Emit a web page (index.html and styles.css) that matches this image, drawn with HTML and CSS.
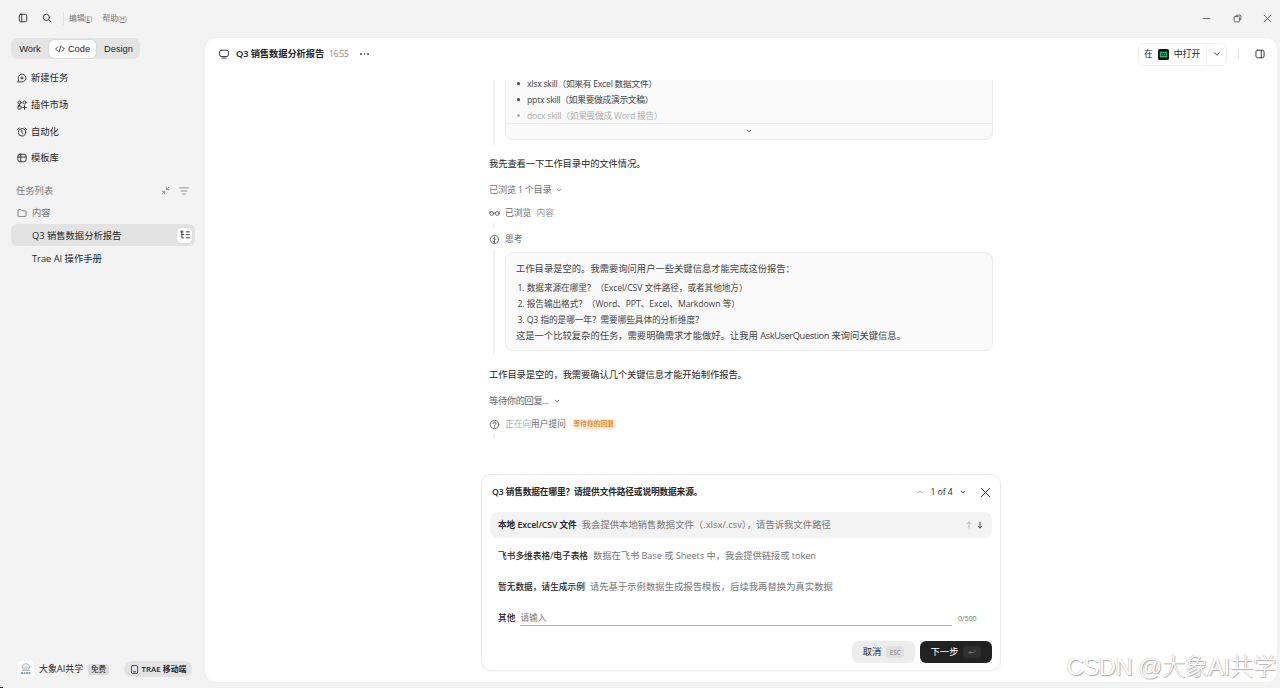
FILE: index.html
```html
<!DOCTYPE html>
<html lang="zh-CN">
<head>
    <meta charset="UTF-8">
    <meta name="viewport" content="width=device-width, initial-scale=1.0">
    <title>Q3 销售数据分析报告</title>
    <link rel="stylesheet" href="styles.css">
</head>
<body>
    <div class="app">

        <!-- 标题栏 -->
        <header class="titlebar">
            <svg class="icon i10 tb-panel" viewBox="0 0 16 16"><rect x="2" y="2" width="12" height="12" rx="2.5"/><path d="M6 2v12"/></svg>
            <svg class="icon i10 tb-search" viewBox="0 0 16 16"><circle cx="7" cy="7" r="5"/><path d="M11 11l3.5 3.5"/></svg>
            <span class="tb-line"></span>
            <span class="tb-menu">编辑<small>(<u>E</u>)</small></span>
            <span class="tb-menu">帮助<small>(<u>H</u>)</small></span>
            <div class="win-buttons">
                <svg class="icon i9" viewBox="0 0 16 16"><path d="M2 8h12"/></svg>
                <svg class="icon i9" viewBox="0 0 16 16"><rect x="2" y="4.5" width="9.5" height="9.5" rx="2"/><path d="M5 4.5V4a2 2 0 0 1 2-2h5a2 2 0 0 1 2 2v5a2 2 0 0 1-2 2"/></svg>
                <svg class="icon i9" viewBox="0 0 16 16"><path d="M2 2l12 12M14 2L2 14"/></svg>
            </div>
        </header>

        <div class="body">
            <!-- 侧边栏 -->
            <aside class="sidebar">
                <div class="tabs">
                    <span class="tab tab-work">Work</span>
                    <span class="tab tab-active"><svg class="icon i10" viewBox="0 0 16 16"><path d="M4.5 4.5L1 8l3.5 3.5M11.5 4.5L15 8l-3.5 3.5M9.5 3l-3 10"/></svg>Code</span>
                    <span class="tab tab-design">Design</span>
                </div>

                <nav class="nav">
                    <a class="nav-item"><svg class="icon i10" viewBox="0 0 16 16"><path d="M1.8 14.2H8a6.2 6.2 0 1 0-5.500-3.400z"/><path d="M8 6v4M6 8h4"/></svg>新建任务</a>
                    <a class="nav-item"><svg class="icon i10" viewBox="0 0 16 16"><circle cx="4" cy="4" r="2.5"/><circle cx="12" cy="4" r="2.5"/><rect x="1.5" y="9.5" width="5" height="5" rx="1"/><path d="M4 6.5v3M12 9v6M9 12h6"/></svg>插件市场</a>
                    <a class="nav-item"><svg class="icon i10" viewBox="0 0 16 16"><circle cx="8" cy="8.5" r="6"/><path d="M7.5 5.5v3.2l2.3 1.8M1 4l2.5-2.5M15 4l-2.5-2.5"/></svg>自动化</a>
                    <a class="nav-item"><svg class="icon i10" viewBox="0 0 16 16"><rect x="1.5" y="2" width="13" height="12" rx="3"/><path d="M1.5 6.5h13M6 2v12"/></svg>模板库</a>
                </nav>

                <div class="list-head">
                    <span>任务列表</span>
                    <svg class="icon i9 collapse" viewBox="0 0 16 16"><path d="M9.5 2v4.5H14M9.5 6.5L14 2M2 9.5h4.5V14M6.5 9.5L2 14"/></svg>
                    <svg class="icon i10 filter" viewBox="0 0 16 16"><path d="M1 3h14M3.5 8h9M6 13h4"/></svg>
                </div>
                <div class="folder"><svg class="icon i10" viewBox="0 0 16 16"><path d="M1.5 4A1.5 1.5 0 0 1 3 2.5h3.2L8 4.5h5A1.5 1.5 0 0 1 14.5 6v6a1.5 1.5 0 0 1-1.5 1.5H3A1.5 1.5 0 0 1 1.5 12z"/></svg>内容</div>
                <div class="task task-active">
                    <span>Q3 销售数据分析报告</span>
                    <span class="tree-btn"><svg class="icon i10" viewBox="0 0 16 16"><path d="M1 3h4M3 1v11.5h3M3 7h3M10 3h5M10 7.5h5M10 12.5h5"/></svg></span>
                </div>
                <div class="task">Trae AI 操作手册</div>

                <div class="user">
                    <span class="avatar"><svg viewBox="0 0 16 16"><path d="M5 8a3.5 3.5 0 1 1 6 0M6 9V5.5M8 9V4.5M10 9V5.5M4 9.5h8"/><path class="avatar-name" d="M3 12h10"/></svg></span>
                    <span class="user-name">大象AI共学</span>
                    <span class="free">免费</span>
                    <span class="mobile"><svg class="icon i9" viewBox="0 0 16 16"><rect x="2.5" y="1" width="11" height="14" rx="2.5"/><path d="M6 12h4"/></svg>TRAE 移动端</span>
                </div>
            </aside>

            <!-- 主面板 -->
            <main class="panel">
                <div class="panel-head">
                    <svg class="icon i10" viewBox="0 0 16 16"><rect x="1" y="2" width="14" height="10" rx="2.5"/><path d="M4.5 14.5h7"/></svg>
                    <b class="panel-title">Q3 销售数据分析报告</b>
                    <span class="time">16:55</span>
                    <span class="dots"><i></i><i></i><i></i></span>
                    <div class="open-in">
                        <span class="open-main">在<svg class="app-logo" viewBox="0 0 12 12"><rect width="12" height="12" rx="2" fill="#101512"/><rect x="2" y="3" width="8" height="6" fill="#24c878"/><rect x="3.2" y="4.2" width="5.8" height="3.6" fill="#10351f"/><path d="M4.5 6h1M7 6h1" stroke="#24c878"/></svg>中打开</span>
                        <span class="open-more"><svg class="icon i8" viewBox="0 0 16 16"><path d="M3 5.5l5 5 5-5"/></svg></span>
                    </div>
                    <span class="head-line"></span>
                    <svg class="icon i10" viewBox="0 0 16 16"><rect x="1.5" y="2" width="13" height="12" rx="2.5"/><path d="M10 2v12"/></svg>
                </div>

                <!-- 对话内容 -->
                <section class="chat">
                    <div class="thought thought-first">
                        <div class="box box-clipped">
                            <ul>
                                <li>xlsx skill（如果有 Excel 数据文件）</li>
                                <li>pptx skill（如果要做成演示文稿）</li>
                                <li class="faded">docx skill（如果要做成 Word 报告）</li>
                            </ul>
                            <div class="expand"><svg class="icon i6" viewBox="0 0 16 16"><path d="M3 6l5 4 5-4"/></svg></div>
                        </div>
                    </div>

                    <p class="say say-look">我先查看一下工作目录中的文件情况。</p>

                    <div class="step-head">已浏览 1 个目录<svg class="icon i6" viewBox="0 0 16 16"><path d="M3 6l5 4 5-4"/></svg></div>
                    <div class="step step-browse">
                        <svg class="icon i11" viewBox="0 0 16 16"><circle cx="4" cy="8" r="2.8"/><circle cx="12" cy="8" r="2.8"/><path d="M6.8 7.5q1.2-1 2.4 0M1.2 7.500V5.500M14.8 7.500V5.500"/></svg>
                        <span>已浏览</span><span class="light">内容</span>
                    </div>
                    <div class="stub"></div>
                    <div class="step step-think">
                        <svg class="icon i11" viewBox="0 0 16 16"><circle cx="8" cy="8" r="6"/><path d="M8 4v8.5M8 5.5L6 7M8 9l2-2M8 12l-2-1.5"/></svg>
                        <span>思考</span>
                    </div>

                    <div class="thought thought-second">
                        <div class="box">
                            <p>工作目录是空的。我需要询问用户一些关键信息才能完成这份报告：</p>
                            <ol>
                                <li>1. 数据来源在哪里？（Excel/CSV 文件路径，或者其他地方）</li>
                                <li>2. 报告输出格式？（Word、PPT、Excel、Markdown 等）</li>
                                <li>3. Q3 指的是哪一年？需要哪些具体的分析维度？</li>
                            </ol>
                            <p>这是一个比较复杂的任务，需要明确需求才能做好。让我用 <span class="latin">AskUserQuestion</span> 来询问关键信息。</p>
                        </div>
                    </div>

                    <p class="say say-confirm">工作目录是空的，我需要确认几个关键信息才能开始制作报告。</p>
                    <div class="step-head step-wait">等待你的回复...<svg class="icon i6" viewBox="0 0 16 16"><path d="M3 6l5 4 5-4"/></svg></div>
                    <div class="step step-ask">
                        <svg class="icon i11" viewBox="0 0 16 16"><circle cx="8" cy="8" r="6.2"/><path d="M6 6.5a2 2 0 1 1 2.8 1.8q-.8.4-.8 1.2M8 11v.8"/></svg>
                        <span><span class="shimmer">正在向</span>用户提问</span><span class="badge">等待你的回复</span>
                    </div>
                    <div class="stub stub-last"></div>
                </section>

                <!-- 提问卡片 -->
                <section class="ask">
                    <div class="ask-head">
                        <b>Q3 销售数据在哪里？请提供文件路径或说明数据来源。</b>
                        <div class="pager">
                            <svg class="icon i6 off" viewBox="0 0 16 16"><path d="M3 10l5-4 5 4"/></svg>
                            <span>1 of 4</span>
                            <svg class="icon i6" viewBox="0 0 16 16"><path d="M3 6l5 4 5-4"/></svg>
                        </div>
                        <svg class="icon close" viewBox="0 0 16 16"><path d="M2 2l12 12M14 2L2 14"/></svg>
                    </div>
                    <div class="option option-active">
                        <b><span class="en">本地 Excel/CSV 文件</span></b><span class="wide">我会提供本地销售数据文件（.xlsx/.csv），请告诉我文件路径</span>
                        <div class="arrows">
                            <svg class="icon i8 off" viewBox="0 0 16 16"><path d="M8 14V2M4 6l4-4 4 4"/></svg>
                            <svg class="icon i8 down" viewBox="0 0 16 16"><path d="M8 2v12M4 10l4 4 4-4"/></svg>
                        </div>
                    </div>
                    <div class="option"><b>飞书多维表格/电子表格</b><span class="tight">数据在飞书 Base 或 Sheets 中，我会提供链接或 token</span></div>
                    <div class="option"><b>暂无数据，请生成示例</b><span class="wide">请先基于示例数据生成报告模板，后续我再替换为真实数据</span></div>
                    <div class="other">
                        <b>其他</b>
                        <span class="field">请输入</span>
                        <span class="count">0/500</span>
                    </div>
                    <div class="actions">
                        <button class="btn">取消<kbd>ESC</kbd></button>
                        <button class="btn btn-dark">下一步<kbd><svg class="icon i8" viewBox="0 0 16 16"><path d="M5 6L2 9l3 3M2 9h9q3 0 3-3V5"/></svg></kbd></button>
                    </div>
                </section>
            </main>
        </div>

        <div class="watermark">CSDN @大象AI共学</div>
        <span class="corner"></span>
    </div>
</body>
</html>
```
FILE: styles.css
```css
* {
    box-sizing: border-box;
}

body {
    margin: 0;
    background: #f3f3f3;
    color: #262626;
    font-family: "Open Sans", "Noto Sans CJK SC", sans-serif;
    font-size: 9.3px;
    line-height: 14px;
}

p, ul, ol {
    margin: 0;
    padding: 0;
    list-style: none;
}

b {
    font-weight: 600;
}

.app {
    position: relative;
    display: flex;
    flex-direction: column;
    width: 1280px;
    height: 688px;
    overflow: hidden;
    white-space: nowrap;
}

/* 图标 */
.icon {
    flex: none;
    fill: none;
    stroke: currentColor;
    stroke-width: 1.4;
    stroke-linecap: round;
    stroke-linejoin: round;
}

.i6 { width: 6px; height: 6px; stroke-width: 2.2; }
.i8 { width: 8px; height: 8px; stroke-width: 1.7; }
.i9 { width: 9px; height: 9px; }
.i10 { width: 10px; height: 10px; }
.i11 { width: 11px; height: 11px; }

.off {
    opacity: 0.5;
}

/* 标题栏 */
.titlebar {
    display: flex;
    align-items: center;
    height: 38px;
    padding: 0 8px 2px 18px;
}

.tb-search {
    margin-left: 14px;
}

.tb-line {
    width: 1px;
    height: 13px;
    margin: 0 5px 0 11px;
    background: #e2e2e2;
}

.tb-menu {
    width: 33.5px;
    color: #777;
    font-size: 7.8px;
}

.tb-menu small {
    font-size: 6.5px;
}

.win-buttons {
    display: flex;
    gap: 21.5px;
    margin-left: auto;
    color: #444;
}

.body {
    display: flex;
    height: 644px;
}

/* 侧边栏 */
.sidebar {
    display: flex;
    flex-direction: column;
    width: 205px;
    padding: 0 10px 0 11px;
}

.tabs {
    display: flex;
    align-items: center;
    flex: none;
    width: 129px;
    height: 21px;
    padding: 1px;
    border-radius: 6px;
    background: #e4e4e4;
    font-family: "Liberation Sans", sans-serif;
}

.tab {
    display: flex;
    align-items: center;
    justify-content: center;
    gap: 3px;
    height: 18px;
}

.tab-work {
    width: 36px;
}

.tab-active {
    width: 47px;
    margin-left: 1px;
    border-radius: 5px;
    background: #fff;
    box-shadow: 0 0 1px rgba(0, 0, 0, 0.3);
}

.tab-design {
    flex: 1;
    padding-left: 2px;
}

.nav {
    padding: 6px 0 0 5.5px;
}

.nav-item {
    display: flex;
    align-items: center;
    gap: 4.5px;
    height: 26.7px;
}

.list-head {
    display: flex;
    align-items: center;
    height: 20px;
    margin-top: 9px;
    padding: 0 6px 0 5px;
    color: #777;
}

.list-head .collapse {
    margin: 0 9px 0 auto;
}

.list-head .icon {
    stroke-width: 1.2;
}

.folder {
    display: flex;
    align-items: center;
    gap: 5px;
    height: 23px;
    padding: 1px 0 0 6px;
    color: #777;
}

.task {
    display: flex;
    align-items: center;
    justify-content: space-between;
    height: 22px;
    padding: 2px 3px 0 21px;
    border-radius: 6px;
}

.task-active {
    width: 184px;
    margin-bottom: 1px;
    background: #e3e3e3;
}

.tree-btn {
    display: flex;
    align-items: center;
    justify-content: center;
    width: 15px;
    height: 15px;
    margin-top: -1px;
    border-radius: 4px;
    background: #fff;
    box-shadow: 0 0 1px rgba(0, 0, 0, 0.25);
}

.user {
    display: flex;
    align-items: center;
    height: 16px;
    margin-top: auto;
    margin-bottom: 5px;
    padding-left: 7px;
}

.avatar {
    display: flex;
    width: 16px;
    height: 16px;
    border-radius: 4px;
    background: #fff;
}

.avatar svg {
    width: 16px;
    fill: none;
    stroke: #91a3bd;
    stroke-width: 0.8;
}

.avatar .avatar-name {
    stroke: #7287a8;
    stroke-width: 1.6;
    stroke-dasharray: 2 0.5;
}

.user-name {
    width: 44px;
    margin-left: 5px;
    font-size: 9px;
}

.free {
    width: 21px;
    height: 11px;
    margin-left: 5px;
    border-radius: 3px;
    background: #dadce1;
    font-size: 7.5px;
    line-height: 11px;
    text-align: center;
}

.mobile {
    display: flex;
    align-items: center;
    justify-content: center;
    gap: 3px;
    width: 68px;
    height: 16px;
    margin-left: 15px;
    border-radius: 8px;
    background: #e3e3e3;
    font-size: 7.9px;
    font-weight: 600;
}

/* 主面板 */
.panel {
    display: flex;
    flex-direction: column;
    width: 1072px;
    height: 644px;
    border-radius: 10px;
    background: #fff;
    box-shadow: 0 0 1px rgba(0, 0, 0, 0.12);
}

.panel-head {
    display: flex;
    align-items: center;
    flex: none;
    height: 32px;
    padding: 0 12px 0 14px;
}

.panel-title {
    width: 88px;
    margin-left: 7px;
    letter-spacing: -0.12px;
}

.time {
    width: 20px;
    margin-left: 5px;
    color: #888;
    font-size: 8.3px;
    letter-spacing: -0.35px;
}

.dots {
    display: flex;
    gap: 2px;
    margin-left: 11px;
}

.dots i {
    width: 1.5px;
    height: 1.5px;
    border-radius: 50%;
    background: #555;
}

.open-in {
    display: flex;
    height: 23px;
    margin-left: auto;
    border: 1px solid #f1f1f1;
    border-radius: 6px;
}

.open-main {
    display: flex;
    align-items: center;
    width: 67px;
    padding-left: 5px;
    font-size: 8.8px;
}

.app-logo {
    width: 11px;
    height: 11px;
    margin: 0 5px;
}

.open-more {
    display: flex;
    align-items: center;
    justify-content: center;
    width: 20px;
    border-left: 1px solid #f1f1f1;
}

.head-line {
    width: 1px;
    height: 9px;
    margin: 0 16px 0 11px;
    background: #e6e6e6;
}

/* 对话 */
.chat {
    flex: none;
    width: 504px;
    height: 394px;
    margin: 10px 0 0 284px;
    overflow: hidden;
}

.thought {
    margin-left: 4px;
    padding-left: 10px;
    border-left: 2px solid #f1f1f1;
}

.thought-first {
    height: 65px;
}

.thought-second {
    height: 105px;
    margin-top: 1px;
    padding-top: 2px;
}

.box {
    width: 488px;
    height: 99px;
    padding: 9px 10px 0;
    border: 1px solid #ececec;
    border-radius: 8px;
    background: #fafafa;
    color: #444;
}

.box li {
    height: 16px;
    font-size: 8.7px;
    line-height: 16px;
    letter-spacing: -0.1px;
}

.box ol {
    height: 53px;
    padding: 4px 0 0 1.5px;
}

.latin {
    letter-spacing: -0.4px;
}

.box-clipped {
    height: 60px;
    padding: 0;
    border-top: 0;
    border-radius: 0 0 8px 8px;
}

.box-clipped ul {
    height: 43px;
}

.box-clipped li {
    position: relative;
    padding-left: 21px;
    letter-spacing: -0.25px;
}

/* 第一行被顶部裁掉一部分 */
.box-clipped li:first-child {
    height: 12px;
    line-height: 8px;
}

.box-clipped li::before {
    content: "";
    position: absolute;
    left: 11px;
    top: 6px;
    width: 3px;
    height: 3px;
    border-radius: 50%;
    background: currentColor;
}

.box-clipped li:first-child::before {
    top: 2px;
}

.box-clipped .faded {
    color: #b0b0b0;
}

.expand {
    display: flex;
    align-items: center;
    justify-content: center;
    height: 15px;
    border-top: 1px solid #ececec;
}

.say {
    height: 14px;
}

.say-look {
    margin-top: 12px;
    letter-spacing: -0.1px;
}

.step-head {
    display: flex;
    align-items: center;
    gap: 5px;
    height: 14px;
    margin-top: 12px;
    color: #777;
    letter-spacing: -0.4px;
}

.step {
    display: flex;
    align-items: center;
    gap: 5px;
    height: 14px;
    color: #666;
}

.step-browse {
    margin-top: 9px;
}

.step-browse span {
    font-size: 8.8px;
}

.step .light {
    color: #999;
}

.stub {
    width: 2px;
    height: 5px;
    margin: 3px 0 0 4px;
    background: #f1f1f1;
}

.step-think {
    margin-top: 4px;
    margin-bottom: 4px;
    font-size: 8.7px;
}

.say-confirm {
    margin-top: 13px;
    letter-spacing: -0.09px;
}

.step-wait {
    color: #666;
}

.step-ask {
    margin-top: 9px;
    font-size: 8.7px;
}

.shimmer {
    color: #b0b0b0;
}

.badge {
    height: 11px;
    margin-left: 1px;
    padding: 0 1.5px;
    border-radius: 6px;
    background: #fdeede;
    color: #e57900;
    font-size: 6.8px;
    font-weight: 500;
    line-height: 10px;
}

/* 提问卡片 */
.ask {
    width: 520px;
    height: 197px;
    margin-left: 276px;
    padding: 5px 8px 0;
    border: 1px solid #ebebeb;
    border-radius: 10px;
    background: #fff;
    box-shadow: 0 1px 2px rgba(0, 0, 0, 0.03);
}

.ask-head {
    display: flex;
    align-items: center;
    height: 24px;
    padding: 0 1px 0 2px;
    font-size: 8.7px;
}

.ask-head b {
    letter-spacing: -0.14px;
}

.pager {
    display: flex;
    align-items: center;
    gap: 7.5px;
    margin-left: auto;
    letter-spacing: -0.1px;
}

.close {
    width: 11px;
    height: 11px;
    margin-left: 14px;
}

.option {
    display: flex;
    align-items: center;
    height: 26px;
    margin-bottom: 5px;
    padding: 0 8px;
    border-radius: 8px;
    color: #777;
}

.option b,
.other b {
    margin-right: 5px;
    color: #262626;
    font-size: 8.7px;
    font-weight: 500;
}

.option .tight {
    letter-spacing: -0.09px;
}

.option .wide {
    letter-spacing: 0.05px;
}

.option-active {
    margin-top: 8px;
    background: #f3f3f3;
}

.option .en {
    font-weight: 600;
    letter-spacing: -0.07px;
}

.arrows {
    display: flex;
    gap: 3px;
    margin-left: auto;
}

.arrows .down {
    color: #333;
}

.other {
    display: flex;
    align-items: center;
    height: 25px;
    padding: 0 14px 0 8px;
}

.field {
    flex: 1;
    height: 17px;
    border-bottom: 1px solid #aeb0b0;
    color: #777;
    font-size: 8.7px;
    line-height: 18px;
}

.count {
    width: 20px;
    margin-left: 6px;
    color: #777;
    font-size: 7.2px;
    letter-spacing: -0.1px;
}

.actions {
    display: flex;
    justify-content: flex-end;
    gap: 5px;
    margin-top: 11px;
}

.btn {
    display: flex;
    align-items: center;
    justify-content: center;
    gap: 5px;
    width: 63px;
    height: 22px;
    padding: 0;
    border: 0;
    border-radius: 6px;
    background: #ededed;
    color: #262626;
    font: inherit;
}

.btn kbd {
    display: flex;
    align-items: center;
    justify-content: center;
    width: 18px;
    height: 12px;
    border-radius: 3px;
    background: #dfdfdf;
    color: #777;
    font: 6.5px "Open Sans", sans-serif;
}

.btn-dark {
    width: 72px;
    background: #222;
    color: #fff;
}

.btn-dark kbd {
    background: #303030;
}

/* 水印 */
.watermark {
    position: absolute;
    right: 4px;
    bottom: 6px;
    color: #fff;
    font-family: "Liberation Sans", "Noto Sans CJK SC", sans-serif;
    font-size: 23.6px;
    font-weight: 300;
    line-height: 30px;
    letter-spacing: -0.4px;
    text-shadow: 1px 1px 1px #aaa, -0.5px -0.5px 0 #bbb;
}

.corner {
    position: absolute;
    left: 0;
    bottom: 0;
    width: 3px;
    height: 1px;
    background: #234;
}
```
